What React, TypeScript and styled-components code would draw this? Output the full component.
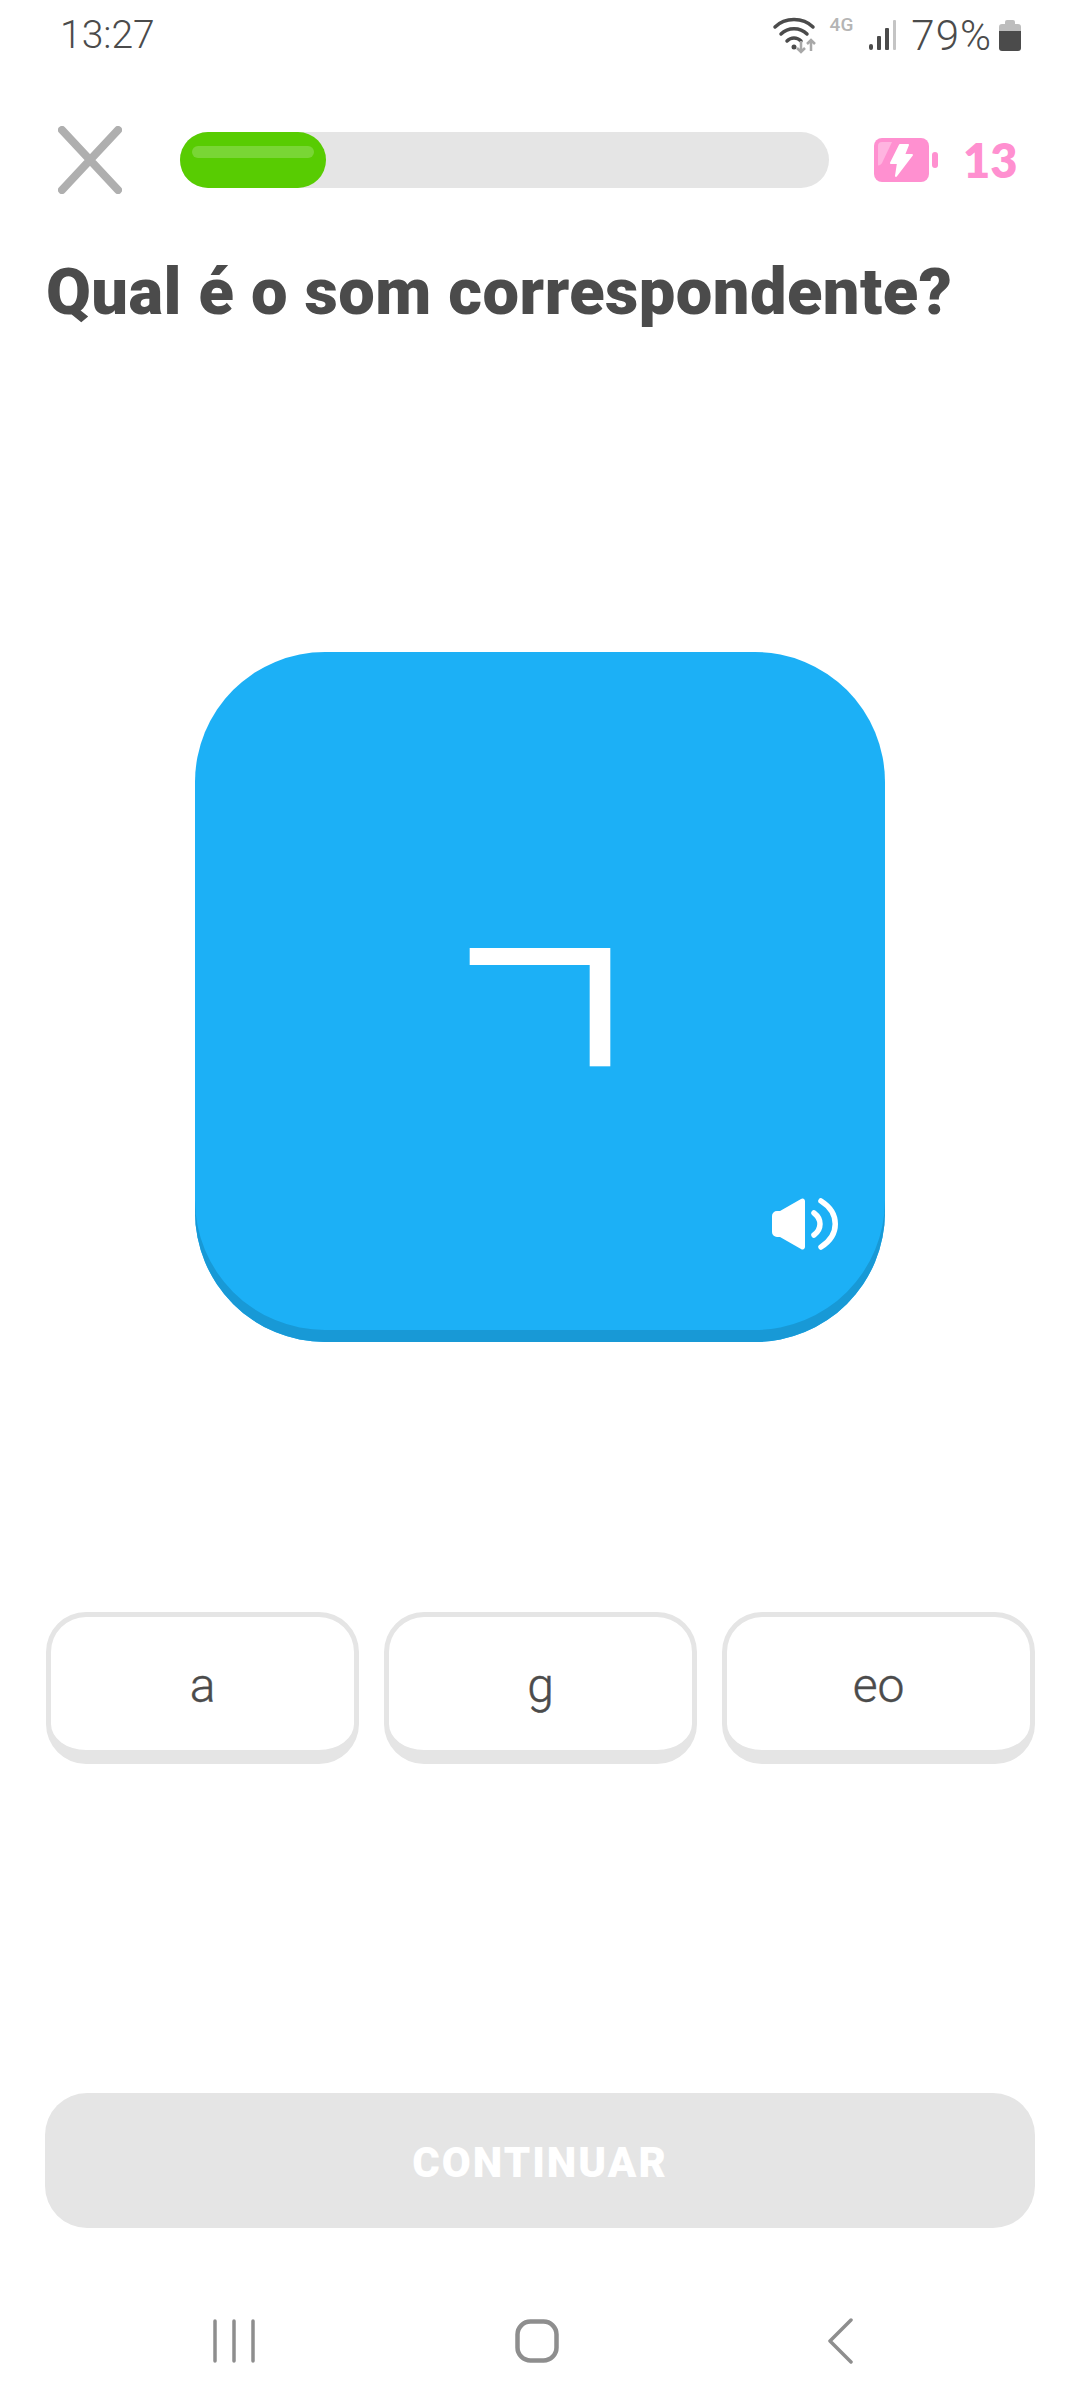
import React from "react";
import styled, { createGlobalStyle } from "styled-components";

const GlobalStyle = createGlobalStyle`
  html, body {
    margin: 0;
    padding: 0;
    background: #ffffff;
  }
  * {
    box-sizing: border-box;
  }
`;

const Screen = styled.div`
  width: 1080px;
  height: 2408px;
  display: flex;
  flex-direction: column;
  background: #ffffff;
  font-family: Roboto, "Liberation Sans", sans-serif;
  overflow: hidden;
`;

const StatusBar = styled.div`
  height: 70px;
  padding: 0 59px 0 60px;
  display: flex;
  justify-content: space-between;
  align-items: center;
  color: #4b4b4b;
`;

const Clock = styled.span`
  font-size: 39px;
  font-weight: 300;
`;

const StatusIcons = styled.div`
  display: flex;
  align-items: center;
`;

const NetworkLabel = styled.span`
  font-size: 19px;
  font-weight: 500;
  color: #b5b5b5;
  margin: -22px 16px 0 12px;
`;

const Percent = styled.span`
  font-size: 42px;
  font-weight: 300;
  letter-spacing: 1px;
  margin: 0 7px 0 14px;
`;

const TopRow = styled.div`
  margin-top: 56px;
  padding: 0 58px;
  height: 68px;
  display: flex;
  align-items: center;
`;

const ProgressTrack = styled.div`
  width: 649px;
  height: 56px;
  margin-left: 58px;
  border-radius: 28px;
  background: #e5e5e5;
  display: flex;
`;

const ProgressFill = styled.div`
  height: 56px;
  padding: 14px 12px 0;
  border-radius: 28px;
  background: #58cc02;
`;

const ProgressShine = styled.div`
  height: 12px;
  border-radius: 6px;
  background: #79d635;
`;

const EnergyIcon = styled.svg`
  margin-left: 45px;
`;

const EnergyCount = styled.span`
  margin-left: 25px;
  font-size: 47px;
  font-weight: 800;
  color: #ff90d0;
  font-family: Lato, sans-serif;
`;

const Question = styled.h1`
  margin: 60px 0 0 46px;
  font-size: 65px;
  line-height: 76px;
  font-weight: 900;
  letter-spacing: 0.45px;
  color: #4b4b4b;
  font-family: Roboto, sans-serif;
  white-space: nowrap;
`;

const CardArea = styled.div`
  margin-top: 322px;
  display: flex;
  justify-content: center;
`;

const SoundCard = styled.div`
  position: relative;
  width: 690px;
  height: 690px;
  padding-bottom: 12px;
  border-radius: 130px;
  background: #1cb0f6;
  box-shadow: inset 0 -12px 0 #1899d6;
  display: flex;
  align-items: center;
  justify-content: center;
`;

const Glyph = styled.span`
  font-family: "Noto Sans CJK KR", sans-serif;
  font-size: 250px;
  line-height: 1;
  color: #ffffff;
`;

const SpeakerIcon = styled.svg`
  position: absolute;
  right: 47px;
  bottom: 92px;
`;

const Choices = styled.div`
  margin-top: 270px;
  padding: 0 45px 0 46px;
  display: grid;
  grid-template-columns: repeat(3, 313px);
  justify-content: space-between;
`;

const Choice = styled.button`
  height: 152px;
  padding: 4px 0 0;
  background: #ffffff;
  border: 5px solid #e5e5e5;
  border-bottom-width: 14px;
  border-radius: 40px;
  font-family: Roboto, sans-serif;
  font-size: 48px;
  font-weight: 300;
  -webkit-text-stroke: 0.4px #4b4b4b;
  color: #4b4b4b;
`;

const ContinueButton = styled.button`
  margin: 329px 45px 0 45px;
  height: 135px;
  padding: 4px 0 0;
  border: none;
  border-radius: 42px;
  background: #e5e5e5;
  color: #ffffff;
  font-family: Roboto, sans-serif;
  font-size: 42px;
  font-weight: 900;
  letter-spacing: 2px;
`;

const NavBar = styled.div`
  margin-top: 90px;
  padding-right: 6px;
  display: flex;
  justify-content: center;
  align-items: center;
`;

const NavSlot = styled.div`
  width: 303px;
  display: flex;
  justify-content: center;
`;

const options = ["a", "g", "eo"];

export default function App() {
  return (
    <Screen>
      <GlobalStyle />
      <StatusBar>
        <Clock>13:27</Clock>
        <StatusIcons>
          <svg width="46" height="40" viewBox="0 0 46 40" fill="none">
            <path d="M3 12C13 2 31 2 41 12" stroke="#4b4b4b" strokeWidth="3.5" strokeLinecap="round" />
            <path d="M9 19C16 12 28 12 35 19" stroke="#4b4b4b" strokeWidth="3.5" strokeLinecap="round" />
            <path d="M15 26C19 22 25 22 29 26" stroke="#4b4b4b" strokeWidth="3.5" strokeLinecap="round" />
            <circle cx="22" cy="32" r="2.5" fill="#4b4b4b" />
            <path d="M29 26V37M25 33L29 37L33 33" stroke="#a8a8a8" strokeWidth="2.5" />
            <path d="M39 36V25M35 29L39 25L43 29" stroke="#a8a8a8" strokeWidth="2.5" />
          </svg>
          <NetworkLabel>4G</NetworkLabel>
          <svg width="28" height="32" viewBox="0 0 28 32">
            <rect x="0" y="25" width="4" height="6" rx="2" fill="#4b4b4b" />
            <rect x="8" y="17" width="4" height="14" rx="1" fill="#4b4b4b" />
            <rect x="16" y="9" width="4" height="22" rx="1" fill="#4b4b4b" />
            <rect x="24" y="1" width="3" height="30" rx="1" fill="#c4c4c4" />
          </svg>
          <Percent>79%</Percent>
          <svg width="22" height="32" viewBox="0 0 22 32">
            <path d="M6 3a2 2 0 0 1 2-2h6a2 2 0 0 1 2 2v2h3a3 3 0 0 1 3 3v4H0V8a3 3 0 0 1 3-3h3Z" fill="#bdbdbd" />
            <path d="M0 12h22v17a3 3 0 0 1-3 3H3a3 3 0 0 1-3-3Z" fill="#4b4b4b" />
          </svg>
        </StatusIcons>
      </StatusBar>

      <TopRow>
        <svg width="64" height="68" viewBox="0 0 64 68" fill="none">
          <path d="M4 4L60 64M60 4L4 64" stroke="#afafaf" strokeWidth="8" strokeLinecap="round" />
        </svg>
        <ProgressTrack>
          <ProgressFill style={{ width: `${(146 / 649) * 100}%` }}>
            <ProgressShine />
          </ProgressFill>
        </ProgressTrack>
        <EnergyIcon width="64" height="44" viewBox="0 0 64 44">
          <rect x="0" y="0" width="55" height="44" rx="8" fill="#ff90d0" />
          <path d="M4 27V8a4 4 0 0 1 4-4h10L8 25c-1 2-4 3-4 2Z" fill="#ffb4e0" />
          <rect x="58" y="14" width="6" height="16" rx="3" fill="#ff90d0" />
          <path d="M26 7L17 25H24L22 38L38 17H30L34 7Z" fill="#ffffff" stroke="#ffffff" strokeWidth="2" strokeLinejoin="round" />
        </EnergyIcon>
        <EnergyCount>13</EnergyCount>
      </TopRow>

      <Question>Qual é o som correspondente?</Question>

      <CardArea>
        <SoundCard>
          <Glyph>ㄱ</Glyph>
          <SpeakerIcon width="66" height="52" viewBox="0 0 66 52" fill="none">
            <path d="M0 18a5 5 0 0 1 5-5h3L29 1a2.500 2.500 0 0 1 4 2V49a2.500 2.500 0 0 1-4 2L8 39H5a5 5 0 0 1-5-5Z" fill="#ffffff" />
            <path d="M42 15C50 21 50 31 42 37" stroke="#ffffff" strokeWidth="5.500" strokeLinecap="round" />
            <path d="M49 3C68 15 68 37 49 49" stroke="#ffffff" strokeWidth="5.500" strokeLinecap="round" />
          </SpeakerIcon>
        </SoundCard>
      </CardArea>

      <Choices>
        {options.map((option) => (
          <Choice key={option}>{option}</Choice>
        ))}
      </Choices>

      <ContinueButton>CONTINUAR</ContinueButton>

      <NavBar>
        <NavSlot>
          <svg width="44" height="44" viewBox="0 0 44 44" fill="none">
            <path d="M3 2V42M22 2V42M41 2V42" stroke="#8e8e8e" strokeWidth="3.500" strokeLinecap="round" />
          </svg>
        </NavSlot>
        <NavSlot>
          <svg width="44" height="44" viewBox="0 0 44 44" fill="none">
            <rect x="2.500" y="2.500" width="39" height="39" rx="13" stroke="#8e8e8e" strokeWidth="4.500" />
          </svg>
        </NavSlot>
        <NavSlot>
          <svg width="26" height="46" viewBox="0 0 26 46" fill="none">
            <path d="M24 2L3 23L24 44" stroke="#8e8e8e" strokeWidth="3.500" strokeLinecap="round" strokeLinejoin="round" />
          </svg>
        </NavSlot>
      </NavBar>
    </Screen>
  );
}
